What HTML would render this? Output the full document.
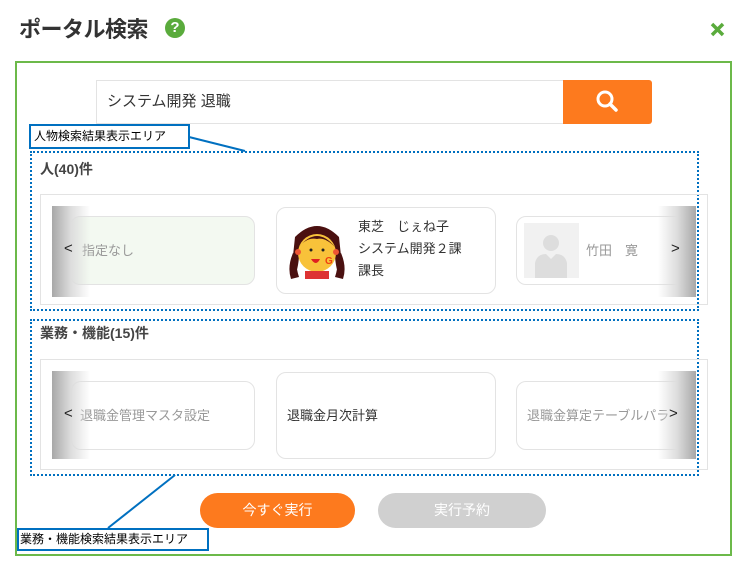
<!DOCTYPE html>
<html><head><meta charset="utf-8"><style>
*{box-sizing:border-box;margin:0;padding:0}
body{width:746px;height:570px;background:#fff;position:relative;overflow:hidden;font-family:"Liberation Sans","Noto Sans CJK JP",sans-serif;color:#333}
.a{position:absolute}
.card{position:absolute;border:1px solid #e3e3e3;border-radius:10px;background:#fff}
.gl{position:absolute;background:linear-gradient(to right,#a8a8a8,#ddd 50%,rgba(255,255,255,0))}
.gr{position:absolute;background:linear-gradient(to left,#a8a8a8,#ddd 50%,rgba(255,255,255,0))}
.dot{position:absolute;border:2px dotted #0070c0}
.lbl{position:absolute;border:2px solid #0070c0;background:#fff;font-size:12px;color:#000;line-height:20px;padding-left:3px}
</style></head><body>
<div class="a" style="left:19px;top:12px;font-size:22px;font-weight:bold;color:#333;letter-spacing:-0.5px">ポータル検索</div>
<div class="a" style="left:165px;top:18px;width:20px;height:20px;border-radius:50%;background:#5aab3c;color:#fff;font-weight:bold;font-size:15px;text-align:center;line-height:20px">?</div>
<svg class="a" style="left:709px;top:21px" width="17" height="17"><path d="M3 3L14 14M14 3L3 14" stroke="#5aab3c" stroke-width="3.5"/></svg>
<div class="a" style="left:15px;top:61px;width:717px;height:495px;border:2px solid #6cb94a"></div>
<div class="a" style="left:96px;top:80px;width:468px;height:44px;border:1px solid #e3e3e3;border-right:none;font-size:15px;line-height:42px;padding-left:10px;color:#333">システム開発 退職</div>
<div class="a" style="left:563px;top:80px;width:89px;height:44px;background:#fd7a1e;border-radius:0 3px 3px 0"></div>
<svg class="a" style="left:594px;top:88px" width="28" height="28"><circle cx="11" cy="11" r="7" stroke="#fff" stroke-width="3" fill="none"/><path d="M16 16L22 22" stroke="#fff" stroke-width="3.5" stroke-linecap="round"/></svg>

<div class="dot" style="left:30px;top:151px;width:669px;height:160px"></div>
<svg class="a" style="left:0;top:0" width="746" height="570"><path d="M189 137L245 151" stroke="#0070c0" stroke-width="2"/><path d="M108 528L175 475" stroke="#0070c0" stroke-width="2"/></svg>
<div class="lbl" style="left:29px;top:124px;width:161px;height:25px">人物検索結果表示エリア</div>
<div class="a" style="left:40px;top:159px;font-size:14px;font-weight:bold;color:#444">人(40)件</div>
<div class="a" style="left:40px;top:194px;width:668px;height:111px;border:1px solid #e3e3e3"></div>
<div class="card" style="left:70px;top:216px;width:185px;height:69px;background:#f3f9f1"></div>
<div class="a" style="left:82px;top:240px;font-size:13px;color:#999">指定なし</div>
<div class="gl" style="left:52px;top:206px;width:38px;height:91px"></div>
<div class="a" style="left:64px;top:240px;font-size:15px;color:#222">&lt;</div>
<div class="card" style="left:276px;top:207px;width:220px;height:87px"></div>
<svg class="a" style="left:285px;top:217px" width="64" height="70">
<path d="M10 20Q32 -2 54 20L58 58Q52 62 50 40Q32 46 14 40Q12 62 6 58Z" fill="#4a1010"/>
<circle cx="32" cy="36" r="19" fill="#f8c23a"/>
<path d="M14 30Q32 8 50 30Q40 20 32 22Q22 20 14 30Z" fill="#4a1010"/>
<circle cx="26" cy="33" r="1.5" fill="#222"/><circle cx="38" cy="33" r="1.5" fill="#222"/>
<path d="M26 42Q31 50 35 42Z" fill="#e02020"/>
<text x="40" y="47" font-size="10" font-weight="bold" fill="#f04010" font-family="Liberation Sans">G</text>
<circle cx="13" cy="35" r="3" fill="#e53"/><circle cx="51" cy="35" r="3" fill="#e53"/>
<rect x="20" y="54" width="24" height="8" fill="#d33"/>
<path d="M8 36Q2 50 6 62L14 60Q10 48 12 38Z M56 36Q62 50 58 62L50 60Q54 48 52 38Z" fill="#4a1010"/>
</svg>
<div class="a" style="left:358px;top:216px;font-size:13px;line-height:22px;color:#333">東芝　じぇね子<br>システム開発２課<br>課長</div>
<div class="card" style="left:516px;top:216px;width:180px;height:69px"></div>
<div class="a" style="left:524px;top:223px;width:55px;height:55px;background:#f1f1f1"></div>
<svg class="a" style="left:524px;top:223px" width="55" height="55"><circle cx="27" cy="20" r="8" fill="#ddd"/><path d="M11 55L11 40Q13 31 22 31L27 36L32 31Q41 31 43 40L43 55Z" fill="#ddd"/></svg>
<div class="a" style="left:586px;top:240px;font-size:13px;color:#999">竹田　寛</div>
<div class="gr" style="left:658px;top:206px;width:38px;height:91px"></div>
<div class="a" style="left:671px;top:240px;font-size:15px;color:#222">&gt;</div>

<div class="dot" style="left:30px;top:319px;width:669px;height:157px"></div>
<div class="a" style="left:40px;top:323px;font-size:14px;font-weight:bold;color:#444">業務・機能(15)件</div>
<div class="a" style="left:40px;top:359px;width:668px;height:111px;border:1px solid #e3e3e3"></div>
<div class="card" style="left:71px;top:381px;width:184px;height:69px"></div>
<div class="a" style="left:80px;top:405px;font-size:13px;color:#999">退職金管理マスタ設定</div>
<div class="gl" style="left:52px;top:371px;width:38px;height:88px"></div>
<div class="a" style="left:64px;top:405px;font-size:15px;color:#222">&lt;</div>
<div class="card" style="left:276px;top:372px;width:220px;height:87px"></div>
<div class="a" style="left:287px;top:405px;font-size:13px;color:#333">退職金月次計算</div>
<div class="card" style="left:516px;top:381px;width:180px;height:69px"></div>
<div class="a" style="left:527px;top:405px;font-size:13px;color:#999;white-space:nowrap;width:150px;overflow:hidden">退職金算定テーブルパラ</div>
<div class="gr" style="left:658px;top:371px;width:38px;height:88px"></div>
<div class="a" style="left:669px;top:405px;font-size:15px;color:#222">&gt;</div>

<div class="a" style="left:200px;top:493px;width:155px;height:35px;border-radius:18px;background:#fd7a1e;color:#fff;font-size:14px;text-align:center;line-height:35px">今すぐ実行</div>
<div class="a" style="left:378px;top:493px;width:168px;height:35px;border-radius:18px;background:#d0d0d0;color:#fff;font-size:14px;text-align:center;line-height:35px">実行予約</div>
<div class="lbl" style="left:17px;top:528px;width:192px;height:23px;padding-left:1px;line-height:19px">業務・機能検索結果表示エリア</div>
</body></html>
